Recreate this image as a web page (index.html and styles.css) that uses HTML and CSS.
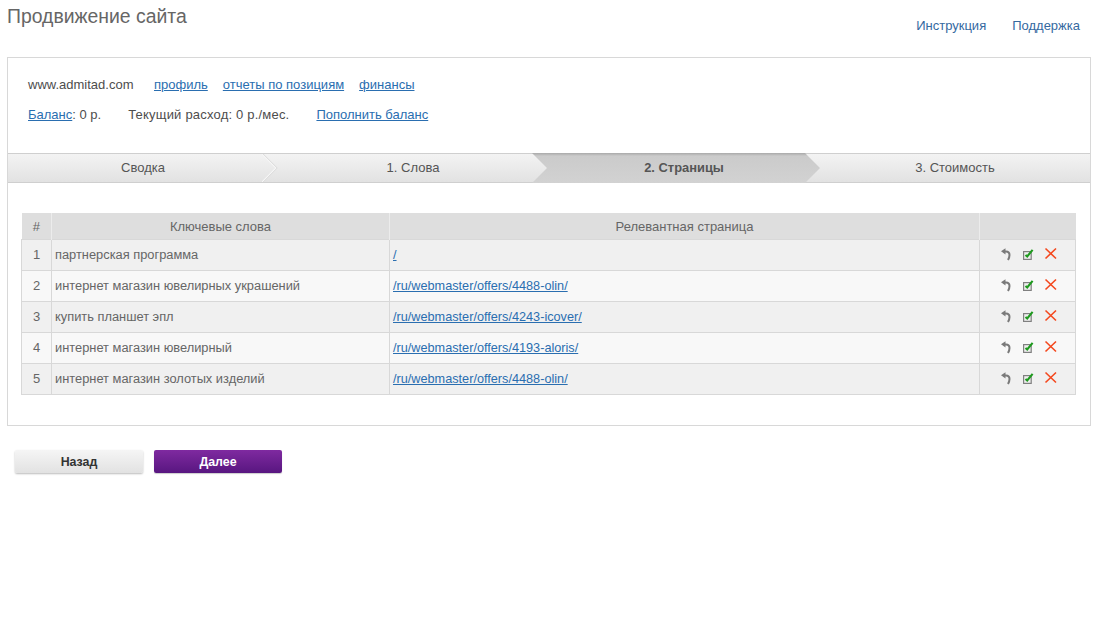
FILE: index.html
```html
<!DOCTYPE html>
<html lang="ru">
<head>
<meta charset="utf-8">
<title>Продвижение сайта</title>
<link rel="stylesheet" href="styles.css">
</head>
<body>
<header class="top">
  <h1 class="title">Продвижение сайта</h1>
  <nav class="top-links"><a href="#">Инструкция</a><a href="#">Поддержка</a></nav>
</header>
<main class="panel">
  <section class="info">
    <div class="info-row"><span class="site">www.admitad.com</span><a class="link" href="#">профиль</a><a class="link" href="#">отчеты по позициям</a><a class="link" href="#">финансы</a></div>
    <div class="info-row balance"><span class="bal"><a class="link" href="#">Баланс</a>: 0 р.</span><span class="cost">Текущий расход: 0 р./мес.</span><a class="link" href="#">Пополнить баланс</a></div>
  </section>
  <div class="steps">
    <div class="step s1">Сводка<svg class="chev" width="16" height="28" viewBox="0 0 16 28"><path d="M0 0L14 14L0 28" fill="none" stroke="#f6f6f6" stroke-width="1.2"/><path d="M1.2 0L15.2 14L1.2 28" fill="none" stroke="#dadada" stroke-width="1"/></svg></div>
    <div class="step s2">1. Слова</div>
    <div class="step s3 active">2. Страницы</div>
    <div class="step s4">3. Стоимость</div>
  </div>
  <div class="table-wrap">
    <table class="kw">
      <thead><tr><th class="c-n">#</th><th class="c-k">Ключевые слова</th><th class="c-p">Релевантная страница</th><th class="c-a"></th></tr></thead>
      <tbody>
        <tr><td class="num">1</td><td>партнерская программа</td><td><a class="link" href="#">/</a></td><td class="acts"><svg class="ico" width="60" height="14" viewBox="0 0 60 14"><use href="#actions"/></svg></td></tr>
        <tr><td class="num">2</td><td>интернет магазин ювелирных украшений</td><td><a class="link" href="#">/ru/webmaster/offers/4488-olin/</a></td><td class="acts"><svg class="ico" width="60" height="14" viewBox="0 0 60 14"><use href="#actions"/></svg></td></tr>
        <tr><td class="num">3</td><td>купить планшет эпл</td><td><a class="link" href="#">/ru/webmaster/offers/4243-icover/</a></td><td class="acts"><svg class="ico" width="60" height="14" viewBox="0 0 60 14"><use href="#actions"/></svg></td></tr>
        <tr><td class="num">4</td><td>интернет магазин ювелирный</td><td><a class="link" href="#">/ru/webmaster/offers/4193-aloris/</a></td><td class="acts"><svg class="ico" width="60" height="14" viewBox="0 0 60 14"><use href="#actions"/></svg></td></tr>
        <tr><td class="num">5</td><td>интернет магазин золотых изделий</td><td><a class="link" href="#">/ru/webmaster/offers/4488-olin/</a></td><td class="acts"><svg class="ico" width="60" height="14" viewBox="0 0 60 14"><use href="#actions"/></svg></td></tr>
      </tbody>
    </table>
  </div>
</main>
<div class="buttons"><button class="btn back">Назад</button><button class="btn next">Далее</button></div>
<svg class="defs" width="0" height="0">
  <defs>
    <g id="actions">
      <path d="M3 4.5H6Q9.5 4.5 9.5 8Q9.5 10.5 8 13" fill="none" stroke="#7a7a7a" stroke-width="2"/>
      <path d="M1 4.2L5.5 1.2V7.5Z" fill="#7a7a7a"/>
      <rect x="23.6" y="4.6" width="7.6" height="7.8" fill="#efefef" stroke="#808080" stroke-width="1.2"/>
      <path d="M25.5 8L27.2 9.5L32.6 2.8" fill="none" stroke="#1f9a1f" stroke-width="2.1"/>
      <path d="M45.5 1.5L56 11.5M56 1.5L45.5 11.5" stroke="#f4481e" stroke-width="1.6" fill="none"/>
    </g>
  </defs>
</svg>
</body>
</html>
```
FILE: styles.css
```css
* { box-sizing: border-box; }
html, body { margin: 0; padding: 0; }
body {
  width: 1100px;
  height: 640px;
  overflow: hidden;
  background: #fff;
  font-family: "Liberation Sans", Arial, sans-serif;
  font-size: 13px;
  color: #555;
}
a { color: #2a6eb0; }
.top {
  display: flex;
  justify-content: space-between;
  height: 57px;
  padding: 6px 20px 0 7px;
}
.title { margin: 0; font-size: 19.4px; font-weight: normal; line-height: 21px; color: #666; }
.top-links { display: flex; gap: 26px; padding-top: 12px; line-height: 16px; }
.top-links a { text-decoration: none; color: #35699f; }
.panel {
  width: 1084px;
  height: 369px;
  margin-left: 7px;
  border: 1px solid #d8d8d8;
}
.info { height: 95px; padding: 19px 20px 0; }
.info-row { display: flex; line-height: 16px; color: #4d4d4d; }
.balance { margin-top: 14px; }
.site { margin-right: 20.5px; }
.info-row .link { margin-right: 15px; }
.balance .bal { margin-right: 27px; }
.balance .bal .link { margin-right: 0; }
.balance .cost { margin-right: 27px; letter-spacing: 0.2px; }
.link { color: #2a6eb0; text-decoration: underline; }
.steps {
  display: flex;
  height: 30px;
  border-top: 1px solid #cfcfcf;
  border-bottom: 1px solid #cfcfcf;
  background: linear-gradient(#f3f3f3, #e2e2e2);
  line-height: 28px;
  text-align: center;
  color: #555;
}
.step { position: relative; height: 28px; }
.s1 { width: 270px; }
.s2 { width: 270px; }
.s3 { width: 288px; margin-left: -16px; padding-left: 16px; }
.s4 { width: 270px; }
.chev { position: absolute; right: 0; top: 0; }
.active {
  font-weight: bold;
  margin-top: -1px;
  height: 30px;
  line-height: 30px;
  font-size: 12.9px;
  background: linear-gradient(#a9a9a9, #cbcbcb 3px, #d2d2d2);
  clip-path: polygon(0 0, 273px 0, 288px 15px, 273px 30px, 0 30px, 15px 15px);
}
.table-wrap { padding: 30px 14px 0 13px; }
.kw {
  width: 1054px;
  border-collapse: collapse;
  table-layout: fixed;
  color: #666;
  font-size: 12.85px;
}
.kw th {
  height: 26px;
  padding: 2px 0 0;
  background: #dedede;
  font-weight: normal;
  font-size: 13px;
  border-left: 1px solid #ececec;
  color: #666;
}
.kw th:first-child { border-left: 0; }
.kw td {
  height: 31px;
  padding: 0 3px 0 3px;
  border: 1px solid #d8d8d8;
  background: #f0f0f0;
}
.kw tbody tr:nth-child(even) td { background: #f8f8f8; }
.kw .link { font-size: 12.7px; }
.c-n { width: 30px; }
.c-k { width: 338px; }
.c-p { width: 590px; }
.c-a { width: 96px; }
.kw td.num { text-align: center; font-size: 13px; }
.kw td.acts { padding: 0 0 1px 20px; }
.ico { display: block; }
.buttons { display: flex; gap: 11px; margin: 24px 0 0 15px; }
.btn {
  height: 23px;
  padding: 0;
  border: 0;
  border-radius: 2px;
  font-family: inherit;
  font-size: 12.4px;
  font-weight: bold;
}
.back {
  width: 128px;
  color: #333;
  background: linear-gradient(#f5f5f5, #e2e2e2);
  box-shadow: 0 1px 2px #bbb;
}
.next {
  width: 128px;
  color: #fff;
  background: linear-gradient(#7f2aa0, #581680);
  box-shadow: 0 1px 1px #ccc;
}
.defs { position: absolute; }
```
